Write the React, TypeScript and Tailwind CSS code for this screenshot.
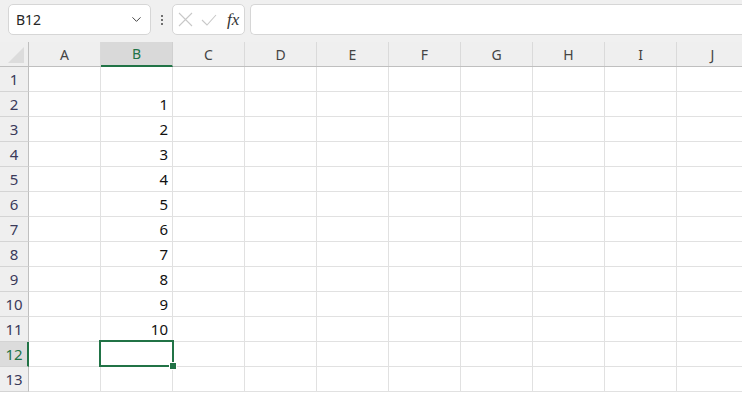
import { ChevronDown } from 'lucide-react'

const COLS = ['A', 'B', 'C', 'D', 'E', 'F', 'G', 'H', 'I', 'J']
const ROWS = Array.from({ length: 13 }, (_, i) => i + 1)
const SEL_COL = 'B'
const SEL_ROW = 12

// column B holds 1..10 in rows 2..11
const valueAt = (col: string, row: number) => (col === 'B' && row >= 2 && row <= 11 ? String(row - 1) : '')

export default function App() {
  return (
    <div className="w-[742px] h-[396px] overflow-hidden bg-white font-['Segoe_UI','Noto_Sans',sans-serif] text-[#222]">
      {/* formula bar */}
      <div className="h-[42px] bg-[#f0f0f0] flex items-start pt-[4px] pl-[8px] gap-0">
        <div className="w-[143px] h-[31px] bg-white border border-[#d6d6d6] rounded-[5px] flex items-center pl-[7px] pr-[6px]">
          <span className="text-[14px] text-[#262626] flex-1">B12</span>
          <ChevronDown size={15} strokeWidth={1.6} className="text-[#444]" />
        </div>
        <div className="w-[21px] h-[31px] flex flex-col items-center justify-center gap-[2px]">
          <span className="w-[2px] h-[2px] bg-[#444] rounded-full" />
          <span className="w-[2px] h-[2px] bg-[#444] rounded-full" />
          <span className="w-[2px] h-[2px] bg-[#444] rounded-full" />
        </div>
        <div className="w-[73px] h-[31px] bg-white border border-[#d6d6d6] rounded-[5px] flex items-center pl-[5px] gap-[8px]">
          <svg width="15" height="15" viewBox="0 0 15 15" className="text-[#c8c8c8]">
            <path d="M1 1 14 14M14 1 1 14" stroke="currentColor" strokeWidth="1.1" fill="none" />
          </svg>
          <svg width="16" height="12" viewBox="0 0 16 12" className="text-[#c8c8c8]">
            <path d="M1 6 6 11 15 1" stroke="currentColor" strokeWidth="1.1" fill="none" />
          </svg>
          <span className="ml-[2px] text-[17px] italic font-['Liberation_Serif',serif] text-[#333]">fx</span>
        </div>
        <div className="ml-[5px] flex-1 h-[31px] bg-white border border-[#d6d6d6] rounded-l-[5px] border-r-0" />
      </div>

      {/* header row */}
      <div className="flex h-[25px] bg-[#efefef] border-b border-[#bfbfbf]">
        <div className="w-[29px] shrink-0 border-r border-[#bfbfbf] relative">
          <div className="absolute left-[8px] top-[5px] w-0 h-0 border-l-[16px] border-l-transparent border-b-[16px] border-b-[#dcdcdc]" />
        </div>
        {COLS.map((c) =>
          c === SEL_COL ? (
            <div
              key={c}
              className="w-[72px] shrink-0 bg-[#d9d9d9] border-r border-[#d0d0d0] border-b-2 border-b-[#217346] -mb-[1px] flex items-center justify-center text-[14px] text-[#217346]"
            >
              {c}
            </div>
          ) : (
            <div key={c} className="w-[72px] shrink-0 border-r border-[#dadada] flex items-center justify-center text-[14px] text-[#444]">
              {c}
            </div>
          )
        )}
      </div>

      {/* rows */}
      {ROWS.map((r) => (
        <div key={r} className="flex h-[25px]">
          {r === SEL_ROW ? (
            <div className="w-[29px] shrink-0 bg-[#dcdcdc] border-r-2 border-r-[#217346] border-b border-b-[#d4d4d4] flex items-center justify-center pl-[1px] text-[15px] text-[#217346]">
              {r}
            </div>
          ) : (
            <div className="w-[29px] shrink-0 bg-[#efefef] border-r border-r-[#bfbfbf] border-b border-b-[#d4d4d4] flex items-center justify-center text-[15px] text-[#3a3a5a]">
              {r}
            </div>
          )}
          {COLS.map((c) => (
            <div key={c} className="relative w-[72px] shrink-0 border-r border-b border-[#e1e1e1] flex items-center justify-end pr-[4px] text-[15px] text-[#111]">
              {valueAt(c, r)}
              {c === SEL_COL && r === SEL_ROW && (
                <div className="absolute z-10 -left-[2px] -top-[2px] -right-[2px] -bottom-[1px] border-2 border-[#217346]">
                  <div className="absolute -right-[5px] -bottom-[5px] w-[8px] h-[8px] bg-[#217346] border border-white" />
                </div>
              )}
            </div>
          ))}
        </div>
      ))}
    </div>
  )
}
